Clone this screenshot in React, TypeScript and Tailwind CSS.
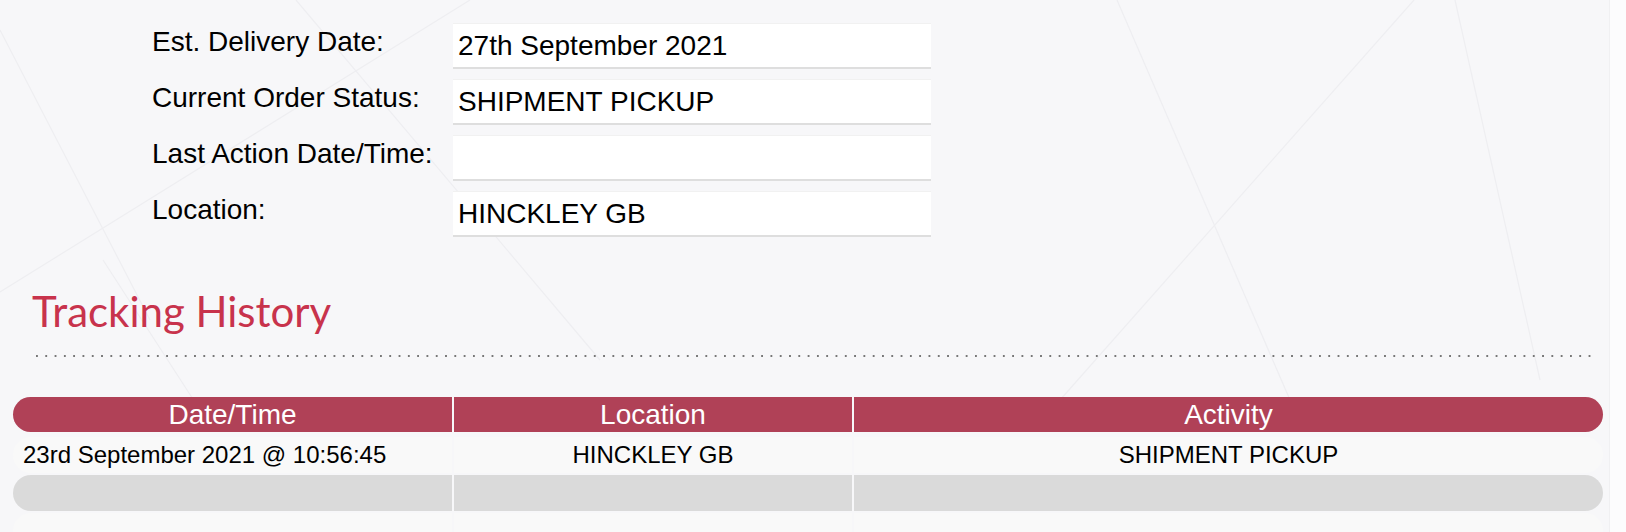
import React from "react";

const fields = [
  { label: "Est. Delivery Date:", value: "27th September 2021" },
  { label: "Current Order Status:", value: "SHIPMENT PICKUP" },
  { label: "Last Action Date/Time:", value: "" },
  { label: "Location:", value: "HINCKLEY GB" },
];

const rows = [
  { date: "23rd September 2021 @ 10:56:45", location: "HINCKLEY GB", activity: "SHIPMENT PICKUP", bg: "bg-[#f9f9f9]" },
  { date: "", location: "", activity: "", bg: "bg-[#dadada]" },
  { date: "", location: "", activity: "", bg: "bg-[#f9f9f9]" },
];

const BackgroundLines = () => (
  <svg className="absolute inset-0 w-full h-full pointer-events-none" width="1626" height="532">
    <g stroke="#eeeef1" strokeWidth="1.2" fill="none">
      <line x1="0" y1="30" x2="150" y2="320" />
      <line x1="0" y1="292" x2="470" y2="0" />
      <line x1="296" y1="0" x2="600" y2="360" />
      <line x1="1117" y1="0" x2="1290" y2="400" />
      <line x1="1414" y1="0" x2="1060" y2="400" />
      <line x1="1455" y1="0" x2="1540" y2="380" />
      <line x1="103" y1="260" x2="200" y2="410" />
    </g>
  </svg>
);

const App = () => {
  return (
    <div className="relative w-full h-[532px] overflow-hidden bg-[#fcfcfd] font-['Liberation_Sans',Arial,sans-serif] text-black">
      <div className="relative w-[1610px] h-full bg-[#f7f7f9] border-r border-[#f0f0f2]">
        <BackgroundLines />

        <div className="relative">
          {/* order summary fields */}
          <div className="pt-[23px] pl-[152px] flex flex-col gap-[10px]">
            {fields.map((f) => (
              <div key={f.label} className="flex items-start">
                <div className="w-[301px] pt-[3px] text-[28px] leading-[32px]">{f.label}</div>
                <div className="w-[478px] h-[46px] bg-white border-t border-t-[#f1f1f1] border-b-2 border-b-[#dedede] pt-[6px] pl-[5px] text-[28px] leading-[32px]">
                  {f.value}
                </div>
              </div>
            ))}
          </div>

          {/* history heading */}
          <h2 className="mt-[50px] pl-[32px] text-[42px] leading-[48px] text-[#c8334c] font-['Lato',sans-serif]">
            Tracking History
          </h2>
          <div className="mt-[20px] ml-[36px] w-[1556px] h-[2px] bg-[linear-gradient(to_right,#777_2px,transparent_2px)] bg-[length:9.3px_2px]" />

          {/* history table */}
          <div className="mt-[40px] pl-[13px] flex flex-col">
            <div className="grid grid-cols-[439px_398px_749px] gap-x-[2px] h-[35px] text-[28px] leading-[35px] text-white">
              <div className="bg-[#b04157] rounded-l-full text-center">Date/Time</div>
              <div className="bg-[#b04157] text-center">Location</div>
              <div className="bg-[#b04157] rounded-r-full text-center">Activity</div>
            </div>
            <div className="mt-[5px] flex flex-col gap-[2px]">
              {rows.map((r, i) => (
                <div key={i} className="grid grid-cols-[439px_398px_749px] gap-x-[2px] h-[36px] text-[24px] leading-[36px]">
                  <div className={`${r.bg} rounded-l-full pl-[10px]`}>{r.date}</div>
                  <div className={`${r.bg} text-center`}>{r.location}</div>
                  <div className={`${r.bg} rounded-r-full text-center`}>{r.activity}</div>
                </div>
              ))}
            </div>
          </div>
        </div>
      </div>
    </div>
  );
};

export default App;
